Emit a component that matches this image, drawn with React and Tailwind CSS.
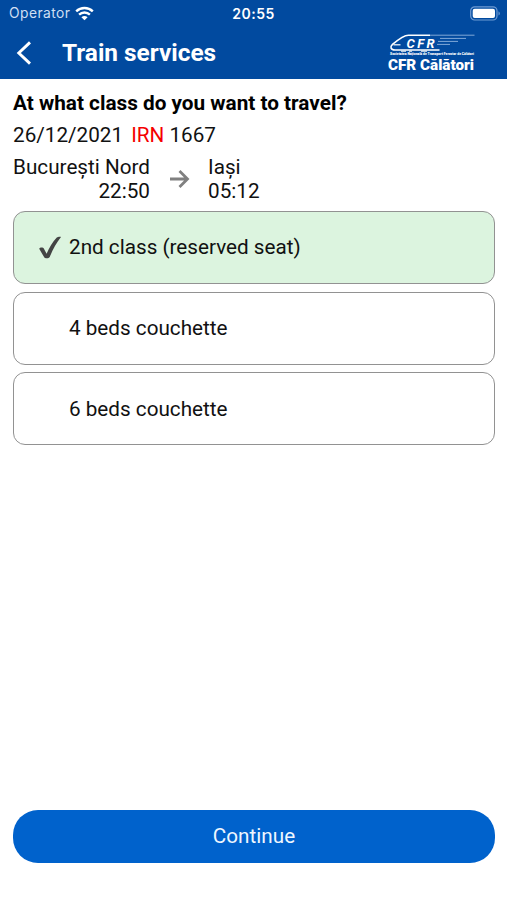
const options = [
  { label: '2nd class (reserved seat)', selected: true },
  { label: '4 beds couchette', selected: false },
  { label: '6 beds couchette', selected: false },
];

function StatusBar() {
  return (
    <div className="grid h-[27px] grid-cols-3 items-center pl-[9px] pr-[6px] text-white">
      <div className="flex items-center gap-[5px] font-['Inter',sans-serif] text-[13.8px] leading-[27px] tracking-[0.45px] text-[#cfdff3]">
        <span>Operator</span>
        <svg width="19" height="15" viewBox="0 0 19 15" fill="none" stroke="#fff">
          <path d="M1.2 5.3C5.8.9 13.2.9 17.8 5.3" strokeWidth="2.4" />
          <path d="M4.1 8.7c3-2.9 7.8-2.9 10.8 0" strokeWidth="2.4" />
          <path d="M9.5 14.2 6.4 11.2c1.7-1.6 4.5-1.6 6.2 0Z" fill="#fff" stroke="none" />
        </svg>
      </div>
      <div className="pr-[3px] text-center font-['Inter',sans-serif] text-[14px] font-semibold leading-[27px] tracking-[0.5px]">20:55</div>
      <svg className="justify-self-end" width="31" height="15" viewBox="0 0 31 15">
        <rect x=".7" y=".8" width="26.3" height="13.2" rx="4" fill="none" stroke="#6f9bd3" strokeWidth="1.2" />
        <rect x="2.7" y="2.8" width="22.3" height="9.2" rx="2" fill="#fff" />
        <path d="M28.5 5.2c1.8.8 1.8 3.6 0 4.4Z" fill="#6f9bd3" />
      </svg>
    </div>
  );
}

function Logo() {
  return (
    <svg width="90" height="42" viewBox="0 0 90 42" fill="#fff">
      <path d="M43 3.2H21.5C17 3.2 11 7.7 5.5 12.4 2.6 15 3.8 18 8 18h44.5" fill="none" stroke="#fff" strokeWidth="1.6" />
      <path d="M6.5 12.8h7" stroke="#fff" strokeWidth="1.2" />
      <path d="M43 3.2h44.5M53 6.4h26M51 9.4h20M50 12.4h13" stroke="#8fb2de" strokeWidth=".9" />
      <path d="M14 19.2h5m3 0h3m9 0h6" stroke="#fff" strokeWidth="1" />
      <text x="19.5" y="15.6" textLength="28" fontFamily="Roboto, sans-serif" fontSize="13" fontWeight="700" fontStyle="italic">CFR</text>
      <text x="3" y="23.4" textLength="84" lengthAdjust="spacingAndGlyphs" fontFamily="Roboto, sans-serif" fontSize="3.6" fontWeight="900">Societatea Națională de Transport Feroviar de Călători</text>
      <text x="1" y="37.6" textLength="86" lengthAdjust="spacingAndGlyphs" fontFamily="Roboto, sans-serif" fontSize="15.5" fontWeight="900">CFR Călători</text>
    </svg>
  );
}

function Header() {
  return (
    <header className="h-[79px] bg-[#014a9f]">
      <StatusBar />
      <div className="flex h-[52px] items-center pl-[16px] pr-[30px] text-white">
        <svg width="17" height="26" viewBox="0 0 17 26" fill="none" stroke="#fff" strokeWidth="2.9">
          <path d="M14 2.4 2.8 13l11.2 10.6" />
        </svg>
        <h1 className="ml-[29px] text-[24.4px] font-bold leading-[28px]">Train services</h1>
        <div className="ml-auto mt-[-1px]"><Logo /></div>
      </div>
    </header>
  );
}

function Option({ label, selected }) {
  return (
    <button
      className={`flex h-[73px] items-center rounded-[12px] border-[1.5px] border-[#929292] text-left text-[20.7px] ${
        selected ? 'bg-[#dcf4df]' : 'bg-white'
      }`}
    >
      <span className="flex w-[55px] justify-end pr-[7px]">
        {selected && (
          <svg width="24" height="24" viewBox="0 0 24 24" fill="#444">
            <path d="M1.2 12.8c.4-1.5 3.8-2 4.6-.4l2.8 5.4C11.3 11.6 14.5 6 18.8 1.5c.8-.8 3.8-1.1 4.2-.5-4.4 5.4-8.4 12.8-11.3 20.1-.7 1.5-4.7 1.8-5.5.2Z" />
          </svg>
        )}
      </span>
      <span className="mt-px">{label}</span>
    </button>
  );
}

export default function App() {
  return (
    <div className="flex h-[900px] w-[507px] flex-col bg-white font-['Roboto',sans-serif] text-[20.7px] text-[#111]">
      <Header />
      <main className="flex flex-1 flex-col pl-[13px] pr-[12px]">
        <h2 className="mt-[12px] text-[20.75px] font-bold leading-[24px] text-black">At what class do you want to travel?</h2>
        <p className="mt-[8px] leading-[24px]">
          26/12/2021 <span className="ml-[3px] text-[#f50000]">IRN</span> 1667
        </p>
        <div className="mt-[8px] flex items-center leading-[24px]">
          <div className="w-[137px] whitespace-nowrap text-right">
            <div>București Nord</div>
            <div>22:50</div>
          </div>
          <svg className="ml-[20px]" width="20" height="20" viewBox="0 0 20 20" fill="none" stroke="#808080" strokeWidth="2.8">
            <path d="M0 10h17M9.5 2l8 8-8 8" />
          </svg>
          <div className="ml-[18px]">
            <div>Iași</div>
            <div>05:12</div>
          </div>
        </div>
        <div className="mt-[8px] flex flex-col gap-[7.6px]">
          {options.map((option) => (
            <Option key={option.label} {...option} />
          ))}
        </div>
        <button className="mb-[37px] mt-auto h-[53px] rounded-[25px] bg-[#0062cc] text-[20.7px] text-[#eef6ff]">Continue</button>
      </main>
    </div>
  );
}
